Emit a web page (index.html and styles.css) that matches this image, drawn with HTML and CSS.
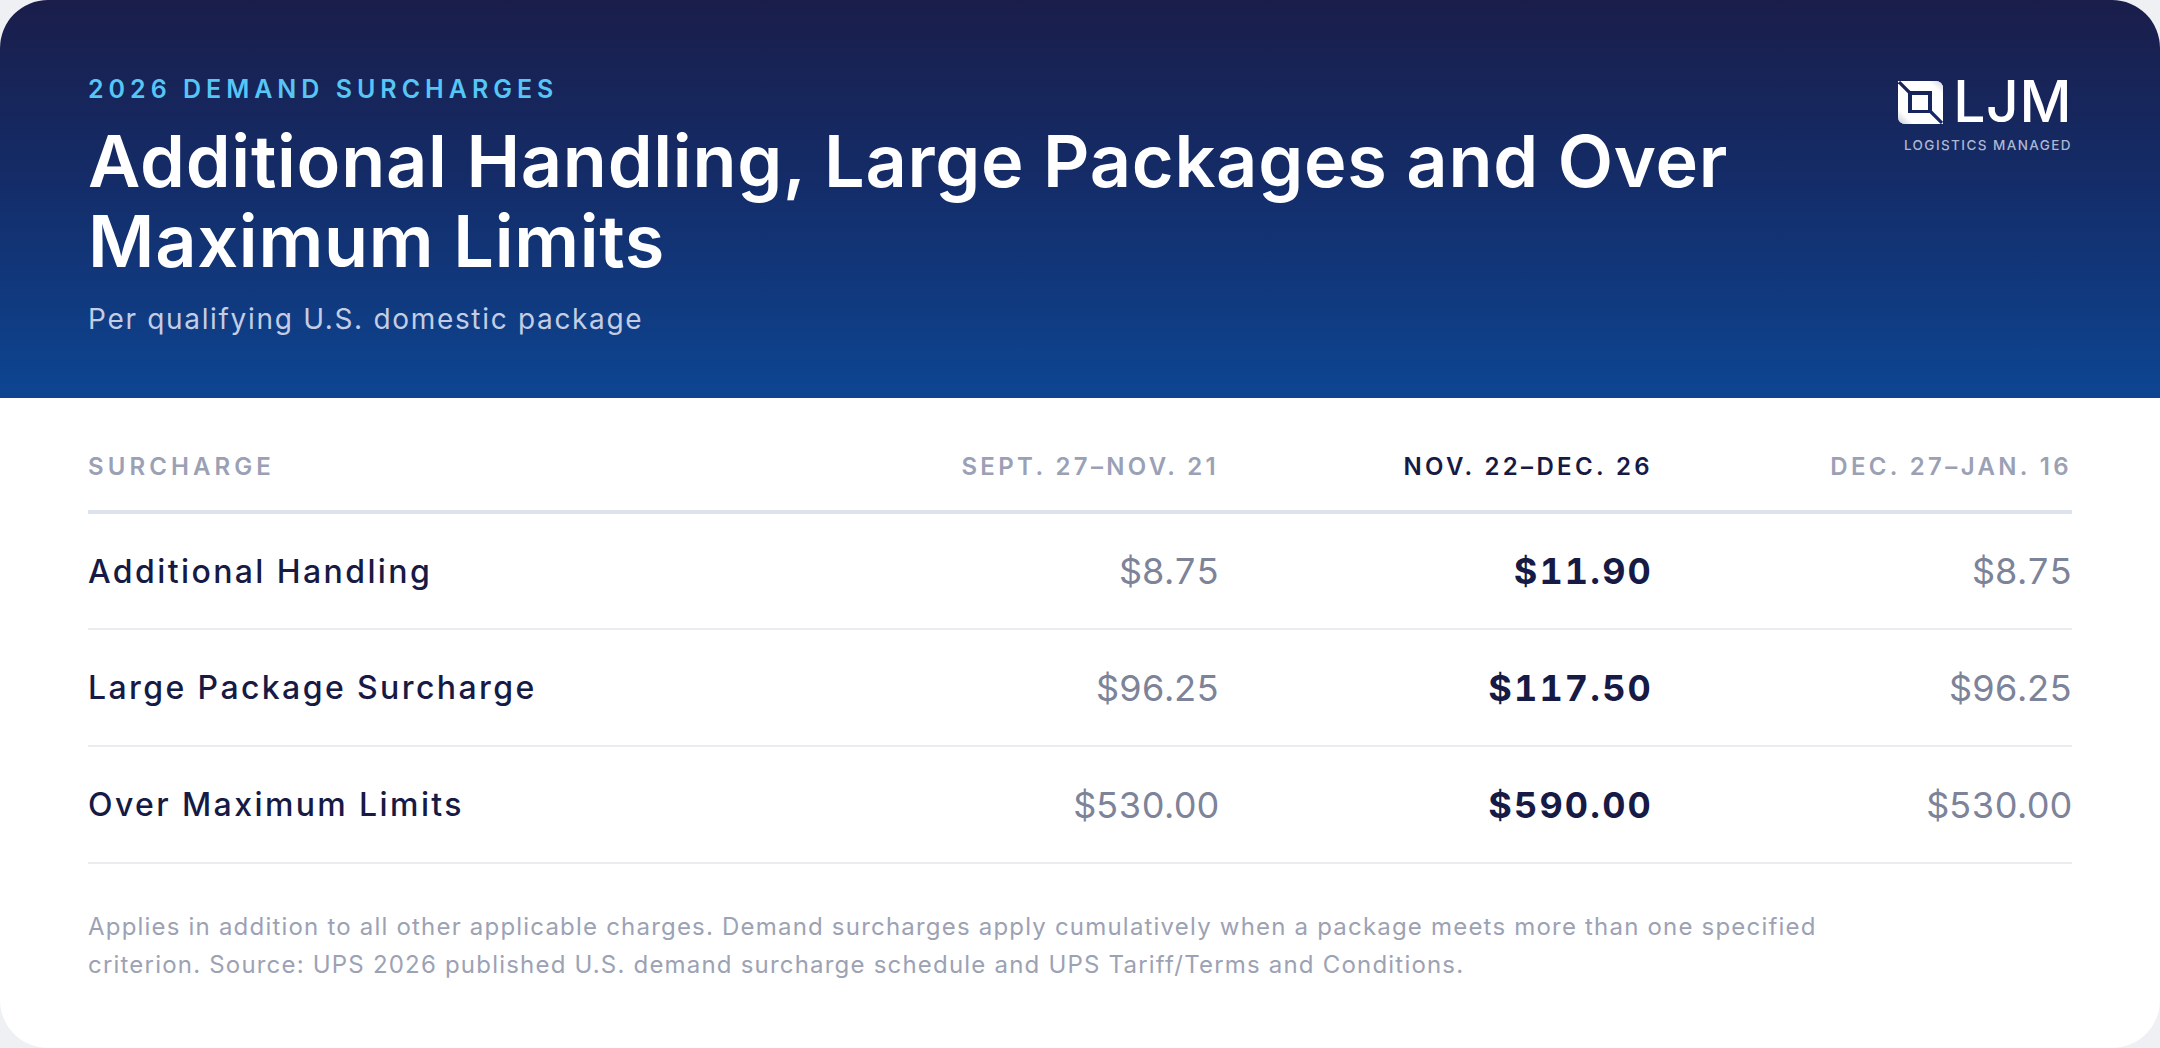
FILE: index.html
```html
<!DOCTYPE html>
<html lang="en">
<head>
<meta charset="utf-8">
<title>2026 Demand Surcharges</title>
<link rel="stylesheet" href="styles.css">
</head>
<body>
<main class="card">
  <header class="hero">
    <div class="hero-text">
      <div class="eyebrow">2026 DEMAND SURCHARGES</div>
      <h1 class="title">Additional Handling, Large Packages and Over Maximum Limits</h1>
      <p class="subtitle">Per qualifying U.S. domestic package</p>
    </div>
    <div class="brand">
      <div class="brand-row">
        <svg class="brand-icon" viewBox="0 0 45 43" aria-hidden="true">
          <defs>
            <linearGradient id="shadeTR" x1="0" y1="1" x2="1" y2="0">
              <stop offset="0" stop-color="#ffffff"/>
              <stop offset="0.5" stop-color="#ffffff"/>
              <stop offset="1" stop-color="#cfd2dc"/>
            </linearGradient>
            <linearGradient id="shadeBL" x1="1" y1="0" x2="0" y2="1">
              <stop offset="0" stop-color="#ffffff"/>
              <stop offset="0.45" stop-color="#ffffff"/>
              <stop offset="1" stop-color="#c6c9d4"/>
            </linearGradient>
          </defs>
          <path fill="#ffffff" fill-rule="evenodd" d="M0 0 H37 Q45 0 45 8 V43 H8 Q0 43 0 35 Z M10 10 V32 H34 V10 Z"/>
          <path fill="url(#shadeTR)" d="M30 0 H37 Q45 0 45 8 V14 H34 V10 H30 Z"/>
          <path fill="url(#shadeBL)" d="M0 29 H10 V32 H15 V43 H8 Q0 43 0 35 Z"/>
          <rect x="14" y="14" width="16" height="15" fill="#ffffff"/>
          <path d="M1 1 L12 12" stroke="#19235a" stroke-width="3.2"/>
          <path d="M32 30 L44 42" stroke="#15296a" stroke-width="3.2"/>
        </svg>
        <span class="brand-name">LJM</span>
      </div>
      <div class="brand-tag">LOGISTICS MANAGED</div>
    </div>
  </header>

  <section class="body">
    <table class="rates">
      <colgroup>
        <col class="c-label">
        <col class="c-p1">
        <col class="c-p2">
        <col class="c-p3">
      </colgroup>
      <thead>
        <tr>
          <th class="th-label">SURCHARGE</th>
          <th class="num">SEPT. 27–NOV. 21</th>
          <th class="num active">NOV. 22–DEC. 26</th>
          <th class="num">DEC. 27–JAN. 16</th>
        </tr>
      </thead>
      <tbody>
        <tr>
          <td class="label">Additional Handling</td>
          <td class="num price">$8.75</td>
          <td class="num price peak">$11.90</td>
          <td class="num price">$8.75</td>
        </tr>
        <tr>
          <td class="label">Large Package Surcharge</td>
          <td class="num price">$96.25</td>
          <td class="num price peak">$117.50</td>
          <td class="num price">$96.25</td>
        </tr>
        <tr>
          <td class="label">Over Maximum Limits</td>
          <td class="num price">$530.00</td>
          <td class="num price peak">$590.00</td>
          <td class="num price">$530.00</td>
        </tr>
      </tbody>
    </table>
    <p class="note">Applies in addition to all other applicable charges. Demand surcharges apply cumulatively when a package meets more than one specified criterion. Source: UPS 2026 published U.S. demand surcharge schedule and UPS Tariff/Terms and Conditions.</p>
  </section>
</main>
</body>
</html>
```

FILE: styles.css
```css
* { box-sizing: border-box; }

html, body {
  margin: 0;
  padding: 0;
  height: 100%;
}

body {
  background: #eef0f4;
  font-family: Inter, "Noto Sans", "Liberation Sans", sans-serif;
}

.card {
  height: 1048px;
  background: #ffffff;
  border-radius: 48px;
  overflow: hidden;
  display: flex;
  flex-direction: column;
}

.hero {
  height: 398px;
  flex: none;
  background: linear-gradient(180deg, #1a1d4a 0%, #142c68 45%, #0d4592 100%);
  padding: 74px 88px 0;
  display: flex;
  justify-content: space-between;
  align-items: flex-start;
}

.eyebrow {
  font-size: 25px;
  line-height: 30px;
  font-weight: 600;
  letter-spacing: 0.2em;
  color: #56c6f6;
}

.title {
  margin: 17px 0 0;
  font-size: 72px;
  line-height: 80px;
  font-weight: 600;
  color: #ffffff;
  max-width: 1760px;
  letter-spacing: 0.01em;
}

.subtitle {
  margin: 20px 0 0;
  font-size: 28px;
  line-height: 36px;
  font-weight: 400;
  color: #c4cde4;
  letter-spacing: 0.06em;
}

.brand {
  margin-top: 6px;
  display: flex;
  flex-direction: column;
  align-items: flex-end;
}

.brand-row {
  display: flex;
  align-items: center;
  gap: 10px;
}

.brand-icon {
  width: 45px;
  height: 43px;
  display: block;
}

.brand-name {
  font-size: 57px;
  line-height: 44px;
  font-weight: 500;
  color: #ffffff;
  letter-spacing: 0.01em;
}

.brand-tag {
  margin-top: 14px;
  font-size: 13.5px;
  line-height: 14px;
  font-weight: 500;
  letter-spacing: 0.105em;
  color: #aeb7d2;
}

.body {
  padding: 0 88px;
}

.rates {
  width: 100%;
  border-collapse: collapse;
  table-layout: fixed;
}

.c-label { width: 731px; }
.c-p1 { width: 400px; }
.c-p2 { width: 434px; }
.c-p3 { width: 419px; }

.rates th {
  padding: 54px 0 28px;
  font-size: 24px;
  line-height: 30px;
  font-weight: 600;
  letter-spacing: 0.14em;
  color: #9ba1b5;
  text-align: left;
  border-bottom: 4px solid #dde3ec;
  white-space: nowrap;
}

.rates th.th-label { letter-spacing: 0.17em; }
.rates th.num { text-align: right; }
.rates th.active { color: #161a45; }

.rates td {
  height: 117px;
  padding: 0;
  border-bottom: 2px solid #ececf0;
  vertical-align: middle;
  white-space: nowrap;
}

.rates .label {
  font-size: 32px;
  font-weight: 500;
  color: #161a45;
  letter-spacing: 0.075em;
}

.rates .price {
  text-align: right;
  font-size: 36px;
  font-weight: 400;
  color: #7d8399;
  font-variant-numeric: tabular-nums;
  letter-spacing: -0.015em;
}

.rates .peak {
  font-weight: 700;
  color: #161a45;
  letter-spacing: 0.06em;
}

.note {
  margin: 44px 0 0;
  max-width: 1790px;
  font-size: 24px;
  line-height: 38px;
  color: #9ca2b4;
  letter-spacing: 0.05em;
}
```
